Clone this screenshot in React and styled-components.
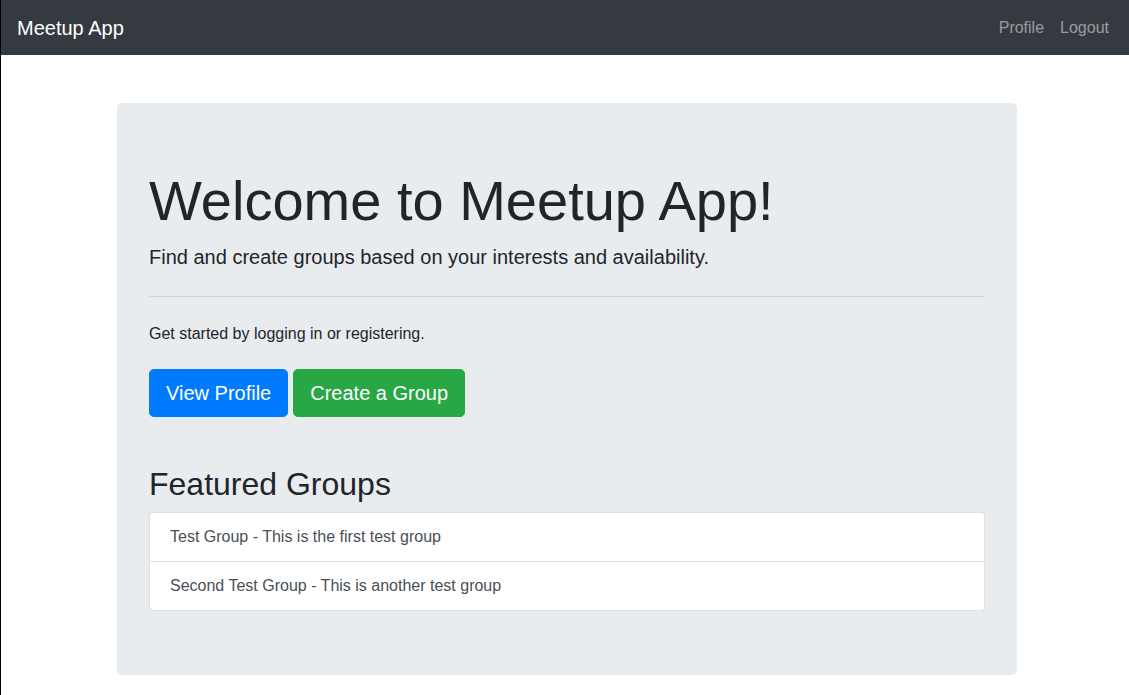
import React from "react";
import styled, { createGlobalStyle } from "styled-components";

const Global = createGlobalStyle`
  * { box-sizing: border-box; }
  html, body { margin: 0; padding: 0; }
  body {
    font-family: "Liberation Sans", Arial, sans-serif;
    font-size: 16px;
    line-height: 1.5;
    color: #212529;
    background: #fff;
  }
`;

const Page = styled.div`
  border-left: 1px solid #000;
  min-height: 695px;
`;

const Navbar = styled.nav`
  display: flex;
  align-items: center;
  justify-content: space-between;
  height: 55px;
  padding: 0 12px 0 16px;
  background: #343a40;
`;

const Brand = styled.a`
  color: #fff;
  font-size: 20px;
  line-height: 30px;
  text-decoration: none;
`;

const NavLinks = styled.div`
  display: flex;
`;

const NavLink = styled.a`
  color: rgba(255, 255, 255, 0.5);
  font-size: 16px;
  padding: 8px;
  text-decoration: none;
`;

const Main = styled.main`
  padding: 48px 0 32px 116px;
`;

const Jumbotron = styled.section`
  width: 900px;
  padding: 64px 32px;
  background: #e9ecef;
  border-radius: 4.8px;
`;

const Title = styled.h1`
  margin: 0 0 8px;
  font-size: 56px;
  font-weight: 300;
  line-height: 1.2;
`;

const Lead = styled.p`
  margin: 0;
  font-size: 20px;
  font-weight: 300;
  line-height: 30px;
`;

const Rule = styled.hr`
  margin: 24px 0 25px;
  border: 0;
  border-top: 1px solid rgba(0, 0, 0, 0.1);
`;

const Text = styled.p`
  margin: 0 0 23px;
`;

const Actions = styled.div`
  display: flex;
  gap: 5px;
`;

const Button = styled.a`
  display: inline-block;
  padding: 8px 16px;
  font-size: 20px;
  line-height: 30px;
  color: #fff;
  background: ${(p) => (p.$variant === "success" ? "#28a745" : "#007bff")};
  border: 1px solid ${(p) => (p.$variant === "success" ? "#28a745" : "#007bff")};
  border-radius: 4.8px;
  text-decoration: none;
`;

const SectionTitle = styled.h2`
  margin: 48px 0 8px;
  font-size: 32px;
  font-weight: 500;
  line-height: 1.2;
`;

const List = styled.div`
  display: flex;
  flex-direction: column;
  background: #fff;
  border: 1px solid rgba(0, 0, 0, 0.125);
  border-radius: 4px;
`;

const Item = styled.a`
  padding: 12px 20px;
  color: #495057;
  text-decoration: none;
  & + & {
    border-top: 1px solid rgba(0, 0, 0, 0.125);
  }
`;

const groups = [
  "Test Group - This is the first test group",
  "Second Test Group - This is another test group",
];

export default function App() {
  return (
    <Page>
      <Global />
      <Navbar>
        <Brand href="#">Meetup App</Brand>
        <NavLinks>
          <NavLink href="#">Profile</NavLink>
          <NavLink href="#">Logout</NavLink>
        </NavLinks>
      </Navbar>
      <Main>
        <Jumbotron>
          <Title>Welcome to Meetup App!</Title>
          <Lead>Find and create groups based on your interests and availability.</Lead>
          <Rule />
          <Text>Get started by logging in or registering.</Text>
          <Actions>
            <Button href="#">View Profile</Button>
            <Button href="#" $variant="success">Create a Group</Button>
          </Actions>
          <SectionTitle>Featured Groups</SectionTitle>
          <List>
            {groups.map((g) => (
              <Item key={g} href="#">{g}</Item>
            ))}
          </List>
        </Jumbotron>
      </Main>
    </Page>
  );
}
